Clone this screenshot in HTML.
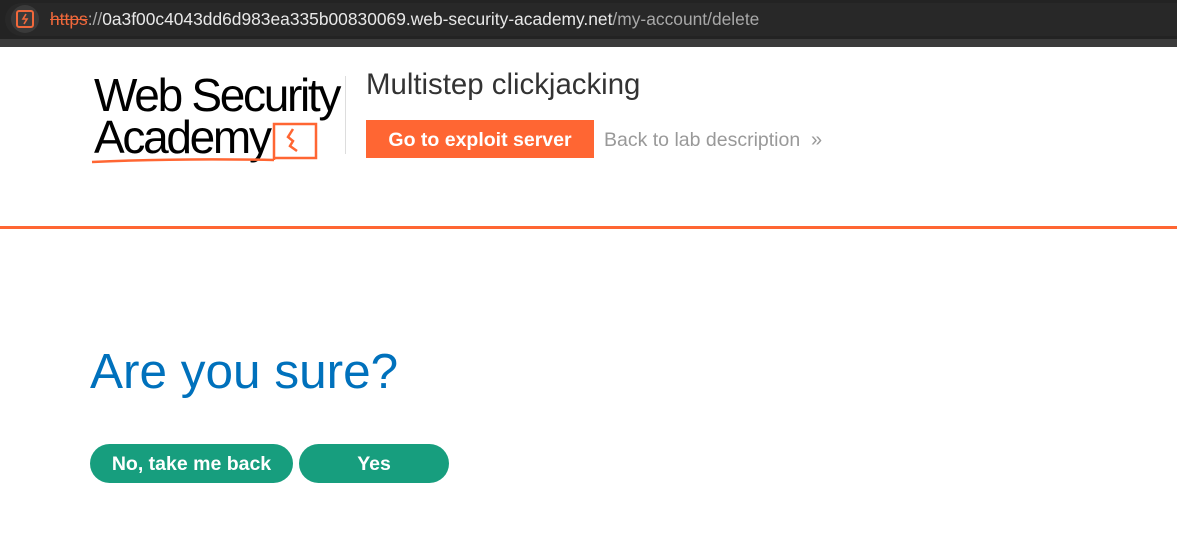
<!DOCTYPE html>
<html><head><style>
body{margin:0;width:1177px;height:544px;overflow:hidden;background:#fff;font-family:"Liberation Sans",sans-serif;position:relative}
.bar{position:absolute;left:0;top:0;width:1177px;height:39px;background:#232323}
.bar2{position:absolute;left:0;top:39px;width:1177px;height:8px;background:#3b3b3b}
.pill{position:absolute;left:5px;top:3px;width:1172px;height:33px;border-radius:17px 0 0 17px;background:#282828}
.ic{position:absolute;left:11px;top:5px;width:28px;height:28px;border-radius:14px;background:#3a3a3a}
.url{position:absolute;left:50px;top:9px;font-size:17.4px;color:#e8e8e8;white-space:nowrap}
.url .s{color:#f0683b;text-decoration:line-through}
.url .g{color:#a8a8a8}
.logo{position:absolute;left:94px;top:74px;font-size:46px;line-height:42px;letter-spacing:-2.3px;color:#000}
.sep{position:absolute;left:345px;top:76px;width:1px;height:78px;background:#ddd}
h2{position:absolute;left:366px;top:68px;margin:0;font-weight:normal;font-size:29.4px;color:#333}
.go{position:absolute;left:366px;top:120px;width:228px;height:38px;background:#ff6633;color:#fff;font-weight:bold;font-size:19.5px;line-height:40px;text-align:center}
.back{position:absolute;left:604px;top:129px;font-size:19.5px;color:#999}
.line{position:absolute;left:0;top:226px;width:1177px;height:3px;background:#ff6633}
h1{position:absolute;left:90px;top:343px;margin:0;font-weight:normal;font-size:49.5px;color:#0071bc}
.btn{position:absolute;top:444px;height:39px;border-radius:20px;background:#179e7e;color:#fff;font-weight:bold;font-size:19.5px;line-height:40px;text-align:center}
</style></head><body>
<div class="bar"></div><div class="bar2"></div><div class="pill"></div>
<div class="ic"><svg width="28" height="28"><rect x="6" y="6" width="16" height="16" rx="2" fill="none" stroke="#f0683b" stroke-width="2"/><path d="M15 9l-3 5h4l-3 5" fill="none" stroke="#f0683b" stroke-width="1.6"/></svg></div>
<div class="url"><span class="s">https</span><span class="g">://</span>0a3f00c4043dd6d983ea335b00830069.web-security-academy.net<span class="g">/my-account/delete</span></div>
<div class="logo">Web Security<br>Academy</div>
<svg style="position:absolute;left:90px;top:120px" width="240" height="45"><path d="M184 40 V4 H226 V38 H184" fill="none" stroke="#ff6633" stroke-width="2.5"/><path d="M203 9 l-5 8 5 4 -3 5 7 5" fill="none" stroke="#ff6633" stroke-width="2.5"/><path d="M2 42 Q90 38 184 40" fill="none" stroke="#ff6633" stroke-width="2.5"/></svg>
<div class="sep"></div>
<h2>Multistep clickjacking</h2>
<div class="go">Go to exploit server</div>
<div class="back">Back to lab description &nbsp;<span style="font-size:20px">»</span></div>
<div class="line"></div>
<h1>Are you sure?</h1>
<div class="btn" style="left:90px;width:203px">No, take me back</div>
<div class="btn" style="left:299px;width:150px">Yes</div>
</body></html>
